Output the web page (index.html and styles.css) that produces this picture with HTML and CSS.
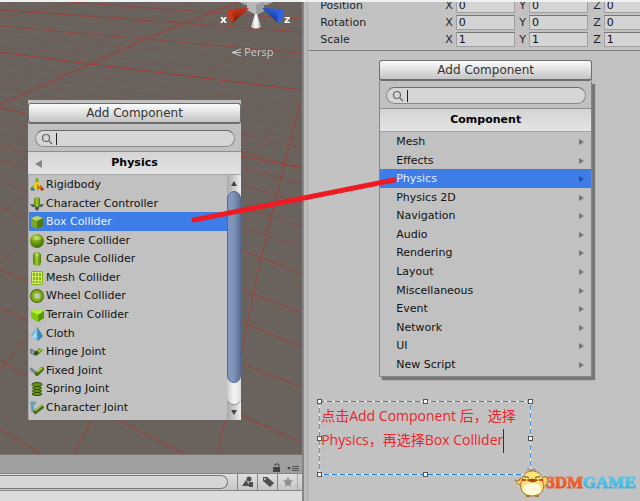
FILE: index.html
```
<!DOCTYPE html>
<html lang="zh-CN">
<head>
<meta charset="utf-8">
<title>Add Component</title>
<link rel="stylesheet" href="styles.css">
</head>
<body>
<svg class="defs" aria-hidden="true">
  <defs>
    <radialGradient id="green" cx=".4" cy=".25" r=".8"><stop offset="0" stop-color="#b9dc4a"/><stop offset=".4" stop-color="#74a512"/><stop offset="1" stop-color="#3e6503"/></radialGradient>
    <linearGradient id="capsule"><stop offset="0" stop-color="#4f7d08"/><stop offset=".45" stop-color="#a0cc2c"/><stop offset="1" stop-color="#4f7d08"/></linearGradient>
    <linearGradient id="xcone" x1="0" y1="0" x2=".4" y2="1"><stop offset="0" stop-color="#d63a1c"/><stop offset=".5" stop-color="#b02c14"/><stop offset="1" stop-color="#5a1b10"/></linearGradient>
    <linearGradient id="zcone" x1="1" y1="0" x2=".4" y2="1"><stop offset="0" stop-color="#2f6cf0"/><stop offset=".5" stop-color="#2350c8"/><stop offset="1" stop-color="#152c70"/></linearGradient>
    <linearGradient id="ycone"><stop offset="0" stop-color="#bbb"/><stop offset=".5" stop-color="#fff"/><stop offset="1" stop-color="#a8a8a8"/></linearGradient>
  </defs>
</svg>
<div class="editor">
  <section class="left">
    <div class="scene">
      <svg class="grid" viewBox="0 0 302 452" preserveAspectRatio="none" aria-hidden="true">
        <g class="faint">
          <path d="M0 8 302 26M0 33 302 62M0 44 302 76M0 62 302 104M0 70 302 115M0 78 302 126M0 86 302 137M0 95 302 150M0 120 302 180M0 132 302 197M0 160 302 218M0 175 302 236"/>
          <path d="M20 0 -20 15M150 0 0 62M190 0 0 82M270 0 60 130M302 10 120 130M302 40 180 140M302 58 200 160M302 85 225 190M302 130 232 250M0 150 28 133M0 175 28 155"/>
        </g>
        <g class="medium">
          <path d="M241 132 302 146M241 150 302 165M241 165 302 182M241 183 302 201M241 205 302 225M241 225 302 245M0 144 28 152M0 158 28 166M0 180 28 189M0 205 28 217"/>
          <path d="M0 212 28 190M0 262 28 230M0 16 80 0"/>
        </g>
        <g class="strong">
          <path d="M0 50 90 62 302 88"/>
          <path d="M-2 103 90 62 145 37 238 0"/>
          <path d="M0 24 145 37 302 51M0 8 180 21 302 30M70 0 302 17" opacity=".7"/>
          <path d="M0 106 28 112M241 154 302 166"/>
          <path d="M241 248 302 272M241 287 302 311M241 320 302 345M241 361 302 386M0 268 28 279M0 305 28 319M0 358 28 374" opacity=".85"/>
          <path d="M300 100 262 250 241 352 217 452M28 333 0 368" opacity=".8"/>
          <path d="M0 427 41 452M92 417 73 452M115 417 186 452M241 413 302 441"/>
        </g>
      </svg>
      <div class="gizmo">
        <svg viewBox="0 0 80 30" aria-hidden="true">
          <path d="M24 0h34l-6 3H30z" fill="#a9a9a9"/>
          <path d="M32 0h17v9l-8 4-9-5z" fill="#b9b9b9"/><path d="M41 3l8-3v9l-8 4z" fill="#9c9c9c"/>
          <path d="M34 6 18 21Q13 18 13 8q9-2 21-2z" fill="url(#xcone)"/><ellipse cx="15.500" cy="14" rx="2.600" ry="7" transform="rotate(-18 15.500 14)" fill="#c93a1c"/>
          <path d="M47 6 63 21Q68 18 68 8q-9-2-21-2z" fill="url(#zcone)"/><ellipse cx="65.500" cy="14" rx="2.600" ry="7" transform="rotate(18 65.500 14)" fill="#2e64e4"/>
          <path d="M40 12h2l4 13q-5 3-10 0z" fill="url(#ycone)"/>
          <text x="5" y="21">x</text><text x="69" y="21">z</text>
        </svg>
        <button class="persp"><svg viewBox="0 0 11 9" aria-hidden="true"><path d="M10 1 1 4.500 10 8M1 4.500h9"/></svg>Persp</button>
      </div>
      <div class="popup docked">
        <button class="add">Add Component</button>
        <label class="search" aria-label="Search physics components">
          <span class="pill"><svg viewBox="0 0 12 12"><circle cx="5" cy="5" r="3.500"/><path d="m8 8 3 3"/></svg><span class="caret"></span><input type="text"></span>
        </label>
        <h2><button class="back" aria-label="Back"></button>Physics</h2>
        <div class="body">
          <ul class="items">
            <li><svg viewBox="0 0 14 14"><path d="m5 8-4 4M9 8l4 4" stroke="#5f9d16" stroke-width="3"/><path d="m9 8 4 4" stroke="#d32c1d" stroke-width="3"/><path d="M1 11h4" stroke="#3d75c4" stroke-width="3"/><path d="M7 0 3 10l4 2 4-2z" fill="#f1cb18"/><path d="M7 6v6l4-2z" fill="#a88209"/><path d="m6 0-1 4h4L8 0z" fill="#7eb01c"/></svg>Rigidbody</li>
            <li><svg viewBox="0 0 14 14"><path d="M0 7h14l-2 3H9v2l-2 2-2-2v-2H2z" fill="#47545d"/><path d="M1 8h12" stroke="#7c8a92"/><rect x="4" width="6" height="10" rx="3" fill="url(#capsule)"/></svg>Character Controller</li>
            <li class="selected"><svg viewBox="0 0 14 14"><path d="m7 1 6 2v8l-6 3-6-3V3z" fill="#7ba524"/><path d="m7 1 6 2-6 3-6-3z" fill="#b9d766"/><path d="M7 6v8l6-3V3z" fill="#547a12"/></svg>Box Collider</li>
            <li><svg viewBox="0 0 14 14"><circle cx="7" cy="7" r="7" fill="url(#green)"/><ellipse cx="7" cy="4" rx="4" ry="2" fill="#c9e080" opacity=".6"/></svg>Sphere Collider</li>
            <li><svg viewBox="0 0 14 14"><rect x="3" width="8" height="14" rx="4" fill="url(#capsule)"/><ellipse cx="7" cy="3" rx="2" ry="2" fill="#c6e070" opacity=".7"/></svg>Capsule Collider</li>
            <li><svg viewBox="0 0 14 14"><rect x="1" y="0" width="12" height="14" rx="2" fill="#83b314"/><path d="M2.500 1.500h9v11h-9zM5.500 1v12M8.500 1v12M2 5.500h10M2 9.500h10" fill="none" stroke="#d3ef65"/></svg>Mesh Collider</li>
            <li><svg viewBox="0 0 14 14"><circle cx="7" cy="7" r="4.800" fill="none" stroke="#446908" stroke-width="4.400"/><circle cx="7" cy="7" r="4.500" fill="none" stroke="#7eaa18" stroke-width="3"/><circle cx="7" cy="7" r="3" fill="none" stroke="#b9d366"/></svg>Wheel Collider</li>
            <li><svg viewBox="0 0 14 14"><path d="m1 3 3-2 3 2 3-2 4 2v7l-6 4-7-4z" fill="#80c80c"/><path d="m1 3 3-2 3 2 3-2 4 2-6 4z" fill="#b6f136"/><path d="M8 7v7l6-4V3z" fill="#5d9507"/></svg>Terrain Collider</li>
            <li><svg viewBox="0 0 14 14"><path d="M7 0c1 4 5 5 6 9l-5 5-7-4C1 6 5 4 7 0z" fill="#6eb2d6"/><path d="M7 0C6 5 4 8 1 10l5 2z" fill="#a9d9ee"/><path d="m7 0 1 14 5-5z" fill="#4387ad"/></svg>Cloth</li>
            <li><svg viewBox="0 0 14 14"><path d="m1 4 5 4M1 4v4l5 2" fill="none" stroke="#718488" stroke-width="2"/><path d="M5 7 9 3l4 2-4 4-3 2z" fill="#5a8d17"/><path d="m7 6 3-2 2 1-3 2" fill="#a2cb48"/><circle cx="6" cy="8" r="2" fill="#37491c"/></svg>Hinge Joint</li>
            <li><svg viewBox="0 0 14 14"><path d="m1 5 6 5" stroke="#74868f" stroke-width="3" stroke-linecap="round"/><path d="m7 10 5-5" stroke="#456e0d" stroke-width="4" stroke-linecap="round"/><path d="m7 8 5-4" stroke="#a0c940" stroke-width="2"/></svg>Fixed Joint</li>
            <li><svg viewBox="0 0 14 14"><g fill="#6b9914" stroke="#2f490a"><ellipse cx="7" cy="12" rx="5" ry="1.500"/><ellipse cx="7" cy="9" rx="4.500" ry="1.500"/><ellipse cx="7" cy="6" rx="4.500" ry="1.500"/><ellipse cx="7" cy="2.500" rx="5" ry="2"/></g></svg>Spring Joint</li>
            <li><svg viewBox="0 0 14 14"><path d="M6 2H2l1 9" fill="none" stroke="#63a0bf" stroke-width="3"/><path d="m4 12 9-7" stroke="#3d690d" stroke-width="4"/><path d="m5 10 7-6" stroke="#8fbe55" stroke-width="2"/></svg>Character Joint</li>
          </ul>
          <div class="scroll"><button class="up" aria-label="Scroll up"></button><div class="track"><div class="thumb"></div></div><button class="down" aria-label="Scroll down"></button></div>
        </div>
      </div>
    </div>
    <div class="project">
      <div class="tabs">
        <svg viewBox="0 0 10 10" aria-hidden="true"><path d="M1 4h7v5H1z" fill="#444"/><path d="M3 3V2q2-2 4 0v3" fill="none" stroke="#555" stroke-width="1.200"/></svg>
        <svg class="wide" viewBox="0 0 14 10" aria-hidden="true"><path d="M1 4h4L3 7z" fill="#444"/><path d="M6 3.500h7M6 5.500h7M6 7.500h7" stroke="#555"/></svg>
      </div>
      <div class="toolbar">
        <input class="query" type="text" aria-label="Search project">
        <button aria-label="Filter by type"><svg viewBox="0 0 12 12"><circle cx="7" cy="3" r="2.500"/><path d="m4 4 4 6H0z"/><path d="M7 6h4v5H7z"/></svg></button>
        <button aria-label="Filter by label"><svg viewBox="0 0 12 12"><path d="M1 1h4l7 6-4 4-7-6z"/><circle cx="3" cy="3" r="1" fill="#ddd"/></svg></button>
        <button aria-label="Favorites"><svg class="star" viewBox="0 0 12 12"><path d="m6 1 1.500 3 3.500.5-2.500 2.500.5 3.500-3-1.500-3 1.500.5-3.500L1 4.500 4.500 4z"/></svg></button>
        <span class="stub"></span>
      </div>
    </div>
  </section>
  <section class="inspector">
    <div class="transform">
      <span class="name">Position</span><label>X<input type="text" value="0"></label><label>Y<input type="text" value="0"></label><label>Z<input type="text" value="0"></label>
      <span class="name">Rotation</span><label>X<input type="text" value="0"></label><label>Y<input type="text" value="0"></label><label>Z<input type="text" value="0"></label>
      <span class="name">Scale</span><label>X<input type="text" value="1"></label><label>Y<input type="text" value="1"></label><label>Z<input type="text" value="1"></label>
    </div>
    <div class="popup menu">
      <button class="add">Add Component</button>
      <div class="sheet">
        <label class="search" aria-label="Search components">
          <span class="pill"><svg viewBox="0 0 12 12"><circle cx="5" cy="5" r="3.500"/><path d="m8 8 3 3"/></svg><span class="caret"></span><input type="text"></span>
        </label>
        <h2>Component</h2>
        <ul class="items groups">
          <li>Mesh</li><li>Effects</li><li class="selected">Physics</li><li>Physics 2D</li><li>Navigation</li><li>Audio</li><li>Rendering</li><li>Layout</li><li>Miscellaneous</li><li>Event</li><li>Network</li><li>UI</li><li>New Script</li>
        </ul>
      </div>
    </div>
    <div class="note">
      <svg class="dashes" aria-hidden="true"><rect width="100%" height="100%"/></svg>
      <i class="h nw"></i><i class="h n"></i><i class="h ne"></i><i class="h w"></i><i class="h e"></i><i class="h sw"></i><i class="h s"></i>
      <p>点击Add Component 后，选择<br>Physics，再选择Box Collider<span class="cursor"></span></p>
    </div>
  </section>
  <svg class="link" viewBox="0 0 206 48" aria-hidden="true"><path d="M3 43 203 3"/></svg>
  <div class="logo">
    <svg viewBox="0 0 36 30" aria-hidden="true">
      <path d="M17 3q-1-3-4-2M17 3q2-3 5-1" fill="none" stroke="#a3773a"/>
      <path d="M7 17Q3 17 1 12l4 1 1-3q3 1 4 5zM27 15q1-6 4-7l1 2 2-1q0 7-5 11z" fill="#f7dc60" stroke="#a3773a"/>
      <path d="M18 3c8 0 11 6 11 11 0 2 1 4 0 7-1 5-6 7-11 7S8 26 7 20c-1-3 0-5 1-8 1-5 4-9 10-9z" fill="#fae477" stroke="#a3773a"/>
      <ellipse cx="18" cy="21" rx="9" ry="6" fill="#fff8dd"/>
      <path d="M10 9q3-1 5 1M21 10q3-2 5-1" fill="none" stroke="#4c3818"/>
      <path d="M13 12q5-2 11 0-5 4-11 0z" fill="#a75017" stroke="#6b3411" stroke-width=".5"/>
      <path d="M8 12h4M25 12h4" stroke="#ef3729" stroke-width="2"/>
      <path d="M12 28h4M21 28h4" stroke="#a3773a" stroke-width="2"/>
    </svg>
    <span class="warm">3DM</span><span class="cool">GAME</span>
  </div>
</div>
</body>
</html>
```
FILE: styles.css
```
* { box-sizing: border-box; }
body { margin: 0; font: 11px/16px "DejaVu Sans", sans-serif; color: #111; background: #c2c2c2; }
button, input { font: inherit; color: inherit; padding: 0; border: 0; background: none; min-width: 0; }
ul, h2, p { margin: 0; padding: 0; list-style: none; }
svg { display: block; flex: none; }
.defs { position: absolute; width: 0; height: 0; }

.editor { position: relative; display: grid; grid-template-columns: 48% 1fr; min-height: 100vh; border-top: 2px solid #eef1f2; overflow: hidden; }
.left { display: flex; flex-direction: column; border-right: 3px solid #bcbcbc; box-shadow: inset -2px 0 #868686; background: #a0a0a0; padding-right: 2px; min-width: 0; }
.inspector { min-width: 0; overflow: hidden; border-left: 1px solid #aaa; }

.scene { position: relative; flex: 1; background: #6a625c; padding: 98px 0 34px 28px; border-bottom: 1px solid #7c7470; }
.grid { position: absolute; inset: 0; width: 100%; height: 100%; fill: none; }
.grid path { fill: none; vector-effect: non-scaling-stroke; }
.faint { stroke: #884a45; opacity: .25; }
.medium { stroke: #9a403b; opacity: .5; }
.strong { stroke: #b13532; opacity: .85; }
.gizmo { position: absolute; top: 0; right: 7px; width: 80px; }
.gizmo text { font: bold 11px "DejaVu Sans", sans-serif; fill: #fff; }
.persp { display: flex; align-items: center; gap: 2px; margin: 12px 0 0 16px; color: #ccc; font: 11px/16px "Open Sans", sans-serif; }
.persp svg { width: 11px; height: 9px; fill: none; stroke: #ccc; }

.popup { width: 213px; position: relative; }
.docked { background: #c1c1c1; padding-top: 3px; }
.add { display: block; width: 100%; height: 21px; border: 1px solid #6d6d6d; border-bottom-width: 2px; border-radius: 3px; background: linear-gradient(#fcfcfc, #c4c4c4); font-size: 12px; text-align: center; color: #333; }
.search { display: block; height: 28px; padding: 6px 6px 0 7px; border-bottom: 1px solid #8d8d8d; }
.pill { display: flex; align-items: center; height: 17px; padding: 0 6px 0 5px; border: 1px solid #8a8a8a; border-top-color: #6a6a6a; border-radius: 9px; background: #d6d6d6; }
.pill svg { width: 12px; height: 12px; fill: none; stroke: #666; stroke-width: 1.2; }
.caret { width: 1px; height: 12px; margin-left: 3px; background: #222; }
.pill input { flex: 1; outline: 0; }
h2 { position: relative; height: 23px; font: bold 11px/21px "DejaVu Sans", sans-serif; text-align: center; background: linear-gradient(#d5d5d5, #e3e3e3); border-bottom: 1px solid #a5a5a5; color: #000; }
.back { position: absolute; left: 7px; top: 8px; border: solid transparent; border-width: 4px 7px 4px 0; border-right-color: #858585; }
.body { display: flex; border-left: 1px solid #aaa; }
.items { flex: 1; display: grid; grid-auto-rows: 1fr; height: 241px; margin-bottom: 4px; }
.items li { display: flex; align-items: center; gap: 2px; padding: 2px 0 0 1px; line-height: 16px; }
.items li svg { width: 14px; height: 14px; }
.items .selected { background: #3e7de7; color: #e7efff; }

.scroll { width: 14px; display: flex; flex-direction: column; background: linear-gradient(90deg, #aaa, #eee); }
.scroll button { height: 16px; display: grid; place-items: center; }
.scroll button::before { content: ""; border: solid transparent; border-width: 0 3px 5px; border-bottom-color: #444; }
.scroll .down::before { border-width: 5px 3px 0; border-top-color: #444; }
.track { flex: 1; border-radius: 7px; background: linear-gradient(90deg, #c9c9c9, #f5f5f5 50%, #ddd); box-shadow: 0 1px #888; }
.thumb { height: 90%; border: 1px solid #536991; border-radius: 7px; background: linear-gradient(90deg, #8095bd, #8396bc 40%, #5f7298); }

.project { background: #dcdcdc; height: 46px; }
.tabs { height: 18px; display: flex; justify-content: flex-end; align-items: flex-end; gap: 4px; padding: 0 2px 0; background: #a0a0a0; }
.tabs svg { width: 10px; height: 10px; }
.tabs .wide { width: 14px; }
.toolbar { display: flex; height: 18px; border: solid #858585; border-width: 1px 0; background: linear-gradient(#dedede, #c6c6c6); }
.query { flex: 1; height: 14px; margin: 1px 9px 0 0; border: 1px solid #777; border-left: 0; border-radius: 0 8px 8px 0; background: #d6d6d6; }
.toolbar button { width: 20px; border-left: 1px solid #858585; display: grid; place-items: center; }
.toolbar button svg { width: 12px; height: 12px; fill: #4e4e4e; }
.toolbar .star { fill: #8e8e8e; }
.stub { width: 5px; border-left: 1px solid #aaa; }

.transform { display: grid; grid-template-columns: 125px repeat(3, 74px); grid-auto-rows: 15px; row-gap: 2px; margin-top: -4px; padding: 0 0 3px 12px; border-bottom: 1px solid #7b7b7b; line-height: 16px; color: #222; }
.transform label { display: flex; gap: 3px; }
.transform input { width: 59px; height: 15px; padding-left: 2px; border: 1px solid #a0a0a0; border-top-color: #777; background: #d4d4d4; color: #111; }

.menu { margin: 9px 0 0 71px; }
.sheet { background: #c1c1c1; border: solid #858585; border-width: 0 1px 1px; box-shadow: 3px 3px 1px #777; }
.sheet .search { padding: 6px 5px 0 6px; }
.groups { margin-bottom: 3px; }
.groups li { justify-content: space-between; padding: 2px 7px 0 16px; }
.groups li::after { content: ""; border: solid transparent; border-width: 3px 0 3px 5px; border-left-color: #777; }
.groups .selected::after { border-left-color: #244f9b; }

.note { position: relative; width: 212px; height: 74px; margin: 24px 0 0 11px; padding: 3px 2px; font: 14px/24px "Open Sans", "Noto Sans CJK SC", sans-serif; color: #e9262d; white-space: nowrap; }
.dashes { position: absolute; inset: 0; width: 100%; height: 100%; background: #f5f5f5; clip-path: polygon(evenodd, 0 0, 100% 0, 100% 100%, 0 100%, 0 0, 1px 1px, calc(100% - 1px) 1px, calc(100% - 1px) calc(100% - 1px), 1px calc(100% - 1px), 1px 1px); }
.dashes rect { fill: none; stroke: #2385d5; stroke-width: 3; stroke-dasharray: 5 3; }
.note p { position: relative; }
.h { position: absolute; width: 5px; height: 5px; background: #fff; border: 1px solid #555; }
.nw, .n, .ne { top: -2px; }
.w, .e { top: calc(50% - 2px); }
.sw, .s { bottom: -2px; }
.nw, .w, .sw { left: -2px; }
.n, .s { left: calc(50% - 2px); }
.ne, .e { right: -2px; }
.cursor { display: inline-block; width: 1px; height: 24px; background: #333; vertical-align: middle; }

.link { position: absolute; left: 191px; top: 175px; width: 206px; height: 48px; }
.link path { stroke: #ed1c24; stroke-width: 5; stroke-linecap: round; }
.logo { position: absolute; right: 4px; bottom: 3px; display: flex; align-items: center; font: bold 17px/26px "Liberation Serif", serif; }
.logo svg { width: 36px; height: 30px; margin-right: -4px; }
.logo span { color: transparent; background-clip: text; -webkit-text-stroke: 1px transparent; }
.warm { background-image: linear-gradient(#f67a46, #e04418); }
.cool { background-image: linear-gradient(#6cd2f0, #2fa6d4); }
```
